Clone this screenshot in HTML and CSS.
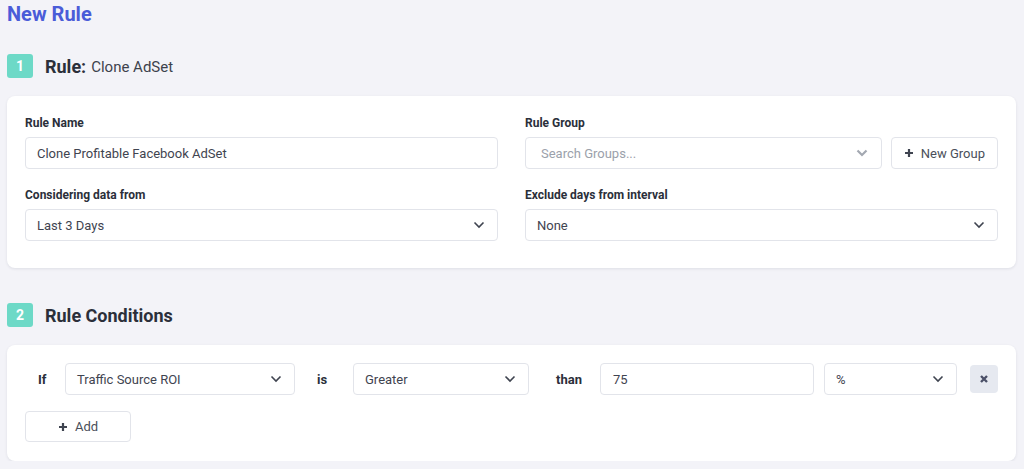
FILE: index.html
```html
<!DOCTYPE html>
<html lang="en">
<head>
  <meta charset="UTF-8" />
  <title>New Rule</title>
  <link rel="stylesheet" href="styles.css">
</head>
<body>
  <h1 class="page-title">New Rule</h1>

  <div class="section-head">
    <span class="step">1</span>
    <span class="section-title">Rule:</span>
    <span class="section-sub">Clone AdSet</span>
  </div>

  <div class="card settings">
    <div class="field">
      <label>Rule Name</label>
      <div class="input">Clone Profitable Facebook AdSet</div>
    </div>
    <div class="field">
      <label>Rule Group</label>
      <div class="group-row">
        <div class="input select placeholder">
          Search Groups...
          <svg class="chev chev-light" width="12" height="8" viewBox="0 0 12 8"><path d="M1.5 1.5l4.5 4.5 4.5-4.5" /></svg>
        </div>
        <button class="btn">
          <svg class="plus" width="10" height="10" viewBox="0 0 10 10"><path d="M5 1v8M1 5h8" /></svg>
          New Group
        </button>
      </div>
    </div>
    <div class="field">
      <label>Considering data from</label>
      <div class="input select">
        Last 3 Days
        <svg class="chev" width="12" height="8" viewBox="0 0 12 8"><path d="M1.5 1.5l4.5 4.5 4.5-4.5" /></svg>
      </div>
    </div>
    <div class="field">
      <label>Exclude days from interval</label>
      <div class="input select">
        None
        <svg class="chev" width="12" height="8" viewBox="0 0 12 8"><path d="M1.5 1.5l4.5 4.5 4.5-4.5" /></svg>
      </div>
    </div>
  </div>

  <div class="section-head">
    <span class="step">2</span>
    <span class="section-title">Rule Conditions</span>
  </div>

  <div class="card conditions">
    <div class="cond-row">
      <span class="word w-if">If</span>
      <div class="input select w-metric">
        Traffic Source ROI
        <svg class="chev" width="12" height="8" viewBox="0 0 12 8"><path d="M1.5 1.5l4.5 4.5 4.5-4.5" /></svg>
      </div>
      <span class="word w-is">is</span>
      <div class="input select w-op">
        Greater
        <svg class="chev" width="12" height="8" viewBox="0 0 12 8"><path d="M1.5 1.5l4.5 4.5 4.5-4.5" /></svg>
      </div>
      <span class="word w-than">than</span>
      <div class="input w-value">75</div>
      <div class="input select w-unit">
        %
        <svg class="chev" width="12" height="8" viewBox="0 0 12 8"><path d="M1.5 1.5l4.5 4.5 4.5-4.5" /></svg>
      </div>
      <button class="remove">
        <svg width="10" height="10" viewBox="0 0 10 10"><path d="M2 2l6 6M8 2l-6 6" /></svg>
      </button>
    </div>
    <button class="btn add">
      <svg class="plus" width="10" height="10" viewBox="0 0 10 10"><path d="M5 1v8M1 5h8" /></svg>
      Add
    </button>
  </div>
</body>
</html>
```

FILE: styles.css
```css
body {
  margin: 0;
  padding: 0 8px 0 7px;
  background-color: #f3f3f8;
  color: #2b2f3a;
  font-family: Roboto, "Liberation Sans", sans-serif;
}

.page-title {
  margin: 0;
  padding-top: 2px;
  font-size: 20px;
  line-height: 24px;
  font-weight: 700;
  color: #4a5cd8;
}

.section-head {
  display: flex;
  align-items: center;
  height: 24px;
}

.page-title + .section-head {
  margin-top: 28px;
}

.card + .section-head {
  margin-top: 35px;
}

.step {
  width: 26px;
  height: 24px;
  border-radius: 3px;
  background-color: #6dd9c7;
  color: #fff;
  font-size: 14px;
  font-weight: 700;
  display: flex;
  align-items: center;
  justify-content: center;
  margin-right: 12px;
}

.section-title {
  font-size: 18px;
  font-weight: 700;
  color: #2b2f3a;
}

.section-sub {
  font-size: 15px;
  color: #3d424d;
  margin-left: 5px;
  padding-top: 1px;
}

.card {
  background-color: #fff;
  border-radius: 8px;
  box-shadow: 0 1px 3px rgba(40, 45, 70, 0.1);
  margin-top: 18px;
}

.settings {
  display: grid;
  grid-template-columns: 1fr 1fr;
  column-gap: 27px;
  row-gap: 18px;
  padding: 19px 18px 27px;
}

.field label {
  display: block;
  font-size: 12px;
  line-height: 16px;
  font-weight: 700;
  color: #2b2f3a;
  margin-bottom: 6px;
}

.input {
  box-sizing: border-box;
  height: 32px;
  border: 1px solid #e2e4ea;
  border-radius: 4px;
  background-color: #fff;
  padding: 0 11px;
  font-size: 13px;
  color: #3f4450;
  display: flex;
  align-items: center;
}

.select {
  justify-content: space-between;
}

.placeholder {
  color: #9ba1ab;
  padding-left: 15px;
}

.chev {
  fill: none;
  stroke: #3f4450;
  stroke-width: 1.6;
  margin-right: 1px;
}

.chev-light {
  stroke: #a3a8b1;
  stroke-width: 2.2;
  margin-right: 2px;
}

.group-row {
  display: flex;
  gap: 9px;
}

.group-row .input {
  flex: 1;
}

.btn {
  box-sizing: border-box;
  height: 32px;
  border: 1px solid #e2e4ea;
  border-radius: 4px;
  background-color: #fff;
  color: #4a4f5a;
  font-family: inherit;
  font-size: 13px;
  padding: 0 12px;
  display: flex;
  align-items: center;
  justify-content: center;
  gap: 7px;
}

.plus {
  stroke: #3f4450;
  stroke-width: 2.2;
}

.conditions {
  padding: 18px 18px 19px;
}

.cond-row {
  display: flex;
  align-items: center;
}

.cond-row > * {
  flex: none;
  box-sizing: border-box;
}

.word {
  font-size: 13px;
  font-weight: 700;
  color: #2b2f3a;
}

.w-if { width: 40px; padding-left: 13px; }
.w-is { width: 58px; padding-left: 22px; }
.w-than { width: 71px; padding-left: 27px; }

.w-metric { width: 230px; }
.w-op { width: 176px; }
.w-value { width: 214px; padding-left: 12px; }
.w-unit { width: 133px; margin-left: 10px; }

.remove {
  width: 28px;
  height: 28px;
  margin-left: 13px;
  border: none;
  border-radius: 4px;
  background-color: #e6e9f0;
  display: flex;
  align-items: center;
  justify-content: center;
  padding: 0;
}

.remove svg {
  stroke: #4b5068;
  stroke-width: 2.4;
}

.add {
  width: 106px;
  height: 31px;
  margin-top: 16px;
}
```
